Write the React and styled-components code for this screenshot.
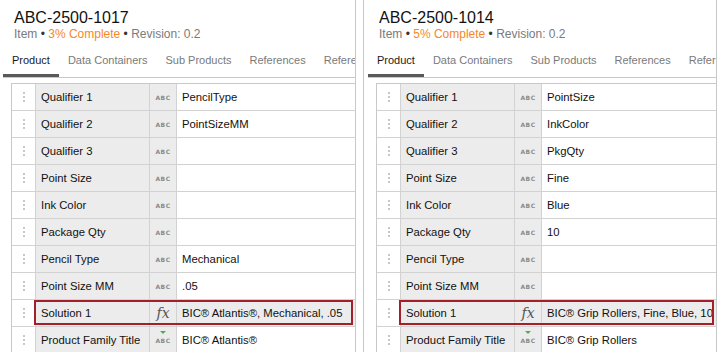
import React from "react";
import styled, { createGlobalStyle } from "styled-components";

const GlobalStyle = createGlobalStyle`
  html, body {
    margin: 0;
    padding: 0;
    background: #ffffff;
    overflow: hidden;
  }
  body {
    font-family: "Liberation Sans", Arial, sans-serif;
    color: #222;
  }
`;

const items = [
  {
    id: "ABC-2500-1017",
    complete: "3% Complete",
    revision: "0.2",
    rows: [
      ["Qualifier 1", "abc", "PencilType"],
      ["Qualifier 2", "abc", "PointSizeMM"],
      ["Qualifier 3", "abc", ""],
      ["Point Size", "abc", ""],
      ["Ink Color", "abc", ""],
      ["Package Qty", "abc", ""],
      ["Pencil Type", "abc", "Mechanical"],
      ["Point Size MM", "abc", ".05"],
      ["Solution 1", "fx", "BIC® Atlantis®, Mechanical, .05"],
      ["Product Family Title", "abcInherit", "BIC® Atlantis®"],
    ],
  },
  {
    id: "ABC-2500-1014",
    complete: "5% Complete",
    revision: "0.2",
    rows: [
      ["Qualifier 1", "abc", "PointSize"],
      ["Qualifier 2", "abc", "InkColor"],
      ["Qualifier 3", "abc", "PkgQty"],
      ["Point Size", "abc", "Fine"],
      ["Ink Color", "abc", "Blue"],
      ["Package Qty", "abc", "10"],
      ["Pencil Type", "abc", ""],
      ["Point Size MM", "abc", ""],
      ["Solution 1", "fx", "BIC® Grip Rollers, Fine, Blue, 10"],
      ["Product Family Title", "abcInherit", "BIC® Grip Rollers"],
    ],
  },
];

const tabs = ["Product", "Data Containers", "Sub Products", "References", "References"];

export default function App() {
  return (
    <>
      <GlobalStyle />
      <Page>
        {items.map((item, i) => (
          <Panel key={item.id} $first={i === 0}>
            <Header>
              <Title>{item.id}</Title>
              <Meta>
                Item <Dot>•</Dot> <Complete>{item.complete}</Complete> <Dot>•</Dot> Revision: {item.revision}
              </Meta>
            </Header>
            <Tabs>
              {tabs.map((t, k) => (
                <Tab key={k} $active={k === 0}>
                  {t}
                </Tab>
              ))}
            </Tabs>
            <Table>
              {item.rows.map(([label, type, value]) => (
                <Row key={label} $selected={label === "Solution 1"}>
                  <Handle>
                    <Dots>
                      <span />
                      <span />
                      <span />
                    </Dots>
                  </Handle>
                  <Label>{label}</Label>
                  <TypeCell>
                    {type === "fx" ? (
                      <Fx>fx</Fx>
                    ) : (
                      <Abc>
                        {type === "abcInherit" && <Inherit />}
                        ABC
                      </Abc>
                    )}
                  </TypeCell>
                  <Value>{value}</Value>
                </Row>
              ))}
            </Table>
          </Panel>
        ))}
      </Page>
    </>
  );
}

const Page = styled.div`
  display: flex;
  gap: 7px;
  width: 718px;
  height: 352px;
  overflow: hidden;
`;

const Panel = styled.div`
  width: ${(p) => (p.$first ? "356px" : "352px")};
  margin-left: ${(p) => (p.$first ? "-2px" : "0")};
  flex-shrink: 0;
  border-left: 1px solid #c9c9c9;
  border-right: 1px solid #c9c9c9;
  display: flex;
  flex-direction: column;
  overflow: hidden;
`;

const Header = styled.div`
  padding: 8px 0 0 15px;
`;

const Title = styled.div`
  font-size: 16px;
  line-height: 19px;
  color: #111;
`;

const Meta = styled.div`
  font-size: 12px;
  line-height: 14px;
  color: #7a7a7a;
  white-space: nowrap;
`;

const Dot = styled.span`
  color: #333;
`;

const Complete = styled.span`
  color: #f5882a;
`;

const Tabs = styled.div`
  display: flex;
  gap: 18px;
  margin: 12px 0 0 4px;
  border-bottom: 1px solid #c9c9c9;
  white-space: nowrap;
`;

const Tab = styled.div`
  font-size: 11px;
  line-height: 14px;
  padding: 0 0 7px;
  color: ${(p) => (p.$active ? "#1a1a1a" : "#7a7a7a")};
  border-bottom: 3px solid ${(p) => (p.$active ? "#595959" : "transparent")};
  flex-shrink: 0;

  &:first-child {
    padding: 0 9px 7px;
    margin-right: -9px;
  }
`;

const Table = styled.div`
  margin: 5px 0 0 12px;
  border-top: 1px solid #c9c9c9;
  border-left: 1px solid #c9c9c9;
  display: flex;
  flex-direction: column;
`;

const Row = styled.div`
  display: grid;
  grid-template-columns: 24px 114px 27px 1fr;
  height: 26px;
  border-bottom: 1px solid #d2d2d2;
  position: relative;
  font-size: 11.3px;
  background: ${(p) => (p.$selected ? "#ececec" : "transparent")};

  &::after {
    content: "";
    display: ${(p) => (p.$selected ? "block" : "none")};
    position: absolute;
    left: 22px;
    right: 2px;
    top: 0;
    bottom: 1px;
    border: 2px solid #a3202b;
    pointer-events: none;
  }
`;

const Cell = styled.div`
  display: flex;
  align-items: center;
  border-right: 1px solid #d2d2d2;
  overflow: hidden;
  white-space: nowrap;
`;

const Handle = styled(Cell)`
  justify-content: center;
  background: #ffffff;
`;

const Dots = styled.div`
  display: flex;
  flex-direction: column;
  gap: 2px;

  span {
    width: 2px;
    height: 2px;
    background: #b5b5b5;
    border-radius: 1px;
  }
`;

const Label = styled(Cell)`
  background: #ececec;
  padding-left: 5px;
  color: #111;
`;

const TypeCell = styled(Cell)`
  background: #ececec;
  justify-content: center;
`;

const Abc = styled.span`
  position: relative;
  font-family: "DejaVu Sans", sans-serif;
  font-size: 6px;
  font-weight: bold;
  color: #8a8a8a;
  letter-spacing: 0.5px;
`;

const Inherit = styled.span`
  position: absolute;
  top: -6px;
  left: 50%;
  margin-left: -3px;
  width: 0;
  height: 0;
  border-left: 3px solid transparent;
  border-right: 3px solid transparent;
  border-top: 3px solid #4caf50;
`;

const Fx = styled.span`
  font-family: "DejaVu Serif", "Liberation Serif", serif;
  font-style: italic;
  font-size: 14px;
  color: #555;
`;

const Value = styled(Cell)`
  padding-left: 5px;
  color: #111;
  border-right: none;
`;
